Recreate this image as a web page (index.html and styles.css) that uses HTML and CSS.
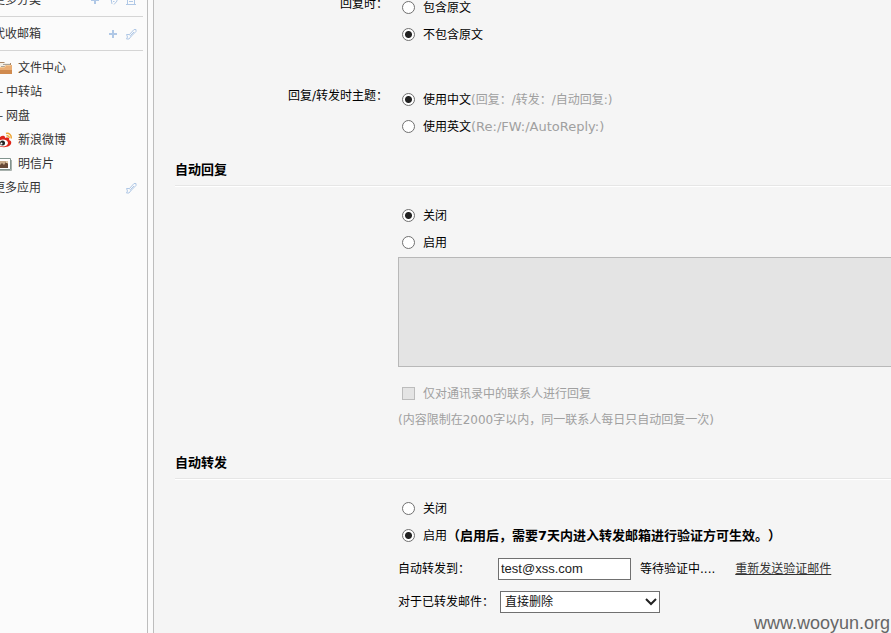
FILE: index.html
```html
<!DOCTYPE html>
<html lang="zh-CN">
<head>
<meta charset="utf-8">
<title>邮箱设置</title>
<link rel="stylesheet" href="styles.css">
</head>
<body>
<div class="page">
  <nav class="sidebar">
    <div class="group">
      <a href="#" class="group-name">更多分类</a>
      <span class="tools">
        <svg class="tool" viewBox="0 0 12 12"><path d="M6 2v8M2 6h8" stroke-width="2"/></svg>
        <svg class="tool" viewBox="0 0 12 12"><path d="M2 5l2 0 1 5M7 10.500l3-3.500V4H7L4 7M6 7.500h1.500"/></svg>
        <svg class="tool" viewBox="0 0 12 12"><path d="M2.500 1.500h7v9h-7zM1 10.500h10M4 5.500h4M4 7.500h4"/></svg>
      </span>
    </div>
    <div class="group">
      <a href="#" class="group-name">代收邮箱</a>
      <span class="tools">
        <svg class="tool" viewBox="0 0 12 12"><path d="M6 2v8M2 6h8" stroke-width="2"/></svg>
        <svg class="tool" viewBox="0 0 12 12"><path d="M1.500 6.500h3l1.500 2-2 2.500h-2.500l1-2zM4.500 6.500L9 1.500h2v2L6 8.500M6 7l3-3"/></svg>
      </span>
    </div>
    <ul class="apps">
      <li><svg class="app-icon" viewBox="0 0 16 16"><path d="M1 2h7l1 1h6v10H1z" fill="#a98766"/><path d="M2 3h12v6H2z" fill="#f3eee4"/><path d="M7 4.500h7M5 6.500h9" stroke="#a9a39a"/><path d="M0 7h8l2-2h6v9H0z" fill="#e9ad74"/><path d="M0 10h16v4H0z" fill="#d08a4e"/><path d="M0 7.500h8.500l2-2H15" fill="none" stroke="#f3c895"/></svg><a href="#">文件中心</a></li>
      <li class="plain"><span class="dash">·-</span><a href="#">中转站</a></li>
      <li class="plain"><span class="dash">·-</span><a href="#">网盘</a></li>
      <li><svg class="app-icon" viewBox="0 0 16 16"><path d="M1 10c0-4 5-7 7-6 1 0 1 1 1 2 3-1 5 0 4 2 3 1 3 4 0 6s-12 2-12-4z" fill="#df2419"/><ellipse cx="7" cy="11" rx="5" ry="3.500" fill="#fff"/><circle cx="6.500" cy="11" r="2.500" fill="#222"/><circle cx="5.500" cy="11.500" r="1" fill="#fff"/><path d="M10 1.500c3-1 6 2 5 5M10.500 4c1.500-.5 3 .5 2.500 2" fill="none" stroke="#efa635" stroke-width="1.500"/></svg><a href="#">新浪微博</a></li>
      <li><svg class="app-icon" viewBox="0 0 16 16"><path d="M1.500 2.500h13v11h-13z" fill="#fff" stroke="#81938e"/><path d="M2 14.500h13.500V4" fill="none" stroke="#a8b1ad"/><path d="M4 5h8v7H4z" fill="#c7aa8a"/><path d="M4 9l2-2 2 2 2-3 2 2v4H4z" fill="#684a37"/><path d="M10 5h2v2h-2z" fill="#dfc9a8"/></svg><a href="#">明信片</a></li>
      <li class="more"><a href="#">更多应用</a>
        <svg class="tool" viewBox="0 0 12 12"><path d="M1.500 6.500h3l1.500 2-2 2.500h-2.500l1-2zM4.500 6.500L9 1.500h2v2L6 8.500M6 7l3-3"/></svg></li>
    </ul>
  </nav>

  <main class="content">
    <form>
      <div class="field" role="group" aria-labelledby="l-reply">
        <span class="label" id="l-reply">回复时：</span>
        <div class="options">
          <label class="choice"><input type="radio" name="quote"><span>包含原文</span></label>
          <label class="choice"><input type="radio" name="quote" checked><span>不包含原文</span></label>
        </div>
      </div>
      <div class="field spaced" role="group" aria-labelledby="l-subject">
        <span class="label" id="l-subject">回复/转发时主题：</span>
        <div class="options">
          <label class="choice"><input type="radio" name="subject" checked><span>使用中文<span class="hint">(回复：/转发：/自动回复:)</span></span></label>
          <label class="choice"><input type="radio" name="subject"><span>使用英文<span class="hint latin">(Re:/FW:/AutoReply:)</span></span></label>
        </div>
      </div>

      <h2>自动回复</h2>
      <div class="field">
        <div class="options">
          <label class="choice"><input type="radio" name="auto" checked><span>关闭</span></label>
          <label class="choice"><input type="radio" name="auto"><span>启用</span></label>
          <textarea class="message" aria-label="自动回复" disabled></textarea>
          <label class="choice hint"><input type="checkbox" disabled><span>仅对通讯录中的联系人进行回复</span></label>
          <p class="note hint">(内容限制在2000字以内，同一联系人每日只自动回复一次)</p>
        </div>
      </div>

      <h2>自动转发</h2>
      <div class="field">
        <div class="options">
          <label class="choice"><input type="radio" name="forward"><span>关闭</span></label>
          <label class="choice"><input type="radio" name="forward" checked><span>启用<strong>（启用后，需要7天内进入转发邮箱进行验证方可生效。）</strong></span></label>
          <div class="line">
            <label for="target">自动转发到：</label>
            <input type="text" id="target" class="target" value="test@xss.com">
            <span class="status">等待验证中....</span>
            <a href="#" class="resend">重新发送验证邮件</a>
          </div>
          <div class="line">
            <label for="after">对于已转发邮件：</label>
            <span class="picker">
              <select id="after"><option>直接删除</option></select>
              <svg class="arrow" viewBox="0 0 12 8"><path d="M1 1l5 5 5-5"/></svg>
            </span>
          </div>
        </div>
      </div>
    </form>
  </main>
  <div class="watermark">www.wooyun.org</div>
</div>
</body>
</html>
```

FILE: styles.css
```css
* { box-sizing: border-box; }

body {
  margin: 0;
  overflow: hidden;
  background: #f5f5f5;
  color: #000;
  font: 12px/18px "DejaVu Sans", "Noto Sans CJK SC", sans-serif;
  text-spacing-trim: space-all;
}

.page {
  position: relative;
  display: flex;
  height: 100vh;
  overflow: hidden;
}

/* Sidebar */
.sidebar {
  flex: 0 0 154px;
  padding-right: 11px;
  background:
    linear-gradient(#bdbdbd, #bdbdbd) right 6px top / 1px 100% no-repeat,
    linear-gradient(#bdbdbd, #bdbdbd) right top / 1px 100% no-repeat,
    #fbfbfb;
  overflow: hidden;
}

.sidebar a { color: #333; text-decoration: none; }

.group {
  display: flex;
  align-items: center;
  justify-content: space-between;
  height: 34px;
  padding-right: 6px;
  border-bottom: 1px solid #d5d5d5;
}

.group:first-child { margin-top: -17px; }
.group-name { margin-left: -7px; }
.tools { display: flex; gap: 6px; }

.tool {
  width: 12px;
  height: 12px;
  fill: none;
  stroke: #b0c8e6;
}

.apps {
  margin: 5px 0 0;
  padding: 0;
  list-style: none;
}

.apps li {
  display: flex;
  align-items: center;
  gap: 6px;
  height: 24px;
}

.app-icon { width: 16px; height: 16px; margin-left: -4px; }
.apps .plain { gap: 3px; }
.dash { margin-left: -5px; width: 8px; color: #555; }
.apps .more {
  justify-content: space-between;
  margin-left: -7px;
  padding-right: 6px;
}

/* Settings form */
.content {
  flex: 1;
  min-width: 0;
  margin-top: -6px;
  padding-left: 21px;
}

.field {
  display: grid;
  grid-template-columns: 213px 1fr;
  column-gap: 10px;
}

.spaced { margin-top: 38px; }
.label { padding-top: 1px; text-align: right; }
.options { grid-column: 2; min-width: 0; }

.choice {
  display: flex;
  align-items: center;
  gap: 8px;
  height: 27px;
  padding-left: 4px;
}

.choice input {
  flex: none;
  width: 13px;
  height: 13px;
  margin: 0;
  appearance: none;
  border: 1px solid #707070;
  background: #fff;
}

.choice input[type="radio"] { border-radius: 50%; }
.choice input[type="radio"]:checked {
  background: radial-gradient(circle, #222 3px, #fff 4px);
}
.choice input[type="checkbox"] {
  border-color: #bcbcbc;
  background: #e4e4e4;
}

.hint { color: #a0a0a0; }
.latin { font-size: 13px; }
.choice strong { font-size: 13px; }

h2 {
  margin: 15px 0 15px;
  height: 32px;
  border-bottom: 1px solid #fff;
  box-shadow: inset 0 -1px #e6e6e6;
  font-size: 13px;
  line-height: 30px;
}

.message {
  display: block;
  width: calc(100% + 8px);
  height: 110px;
  margin: 1px 0 13px;
  border: 1px solid #b8b8b8;
  background: #e4e4e4;
  resize: none;
}

.note { margin: 0; line-height: 26px; }

.line {
  display: flex;
  align-items: center;
  height: 33px;
}

.line:first-of-type { margin-top: 3px; }
.line label { min-width: 100px; white-space: nowrap; }

.target {
  width: 133px;
  height: 22px;
  padding: 0 2px;
  border: 1px solid #707070;
  background: #fff;
  color: #222;
  font: 13px/18px "Liberation Sans", sans-serif;
}

.status { margin: 0 20px 0 9px; }
.resend { color: #333; }

.picker { position: relative; margin-left: 2px; }

.picker select {
  display: block;
  width: 160px;
  height: 22px;
  padding: 0 4px;
  appearance: none;
  border: 1px solid #707070;
  border-radius: 0;
  background: #fff;
  color: #111;
  font: inherit;
}

.arrow {
  position: absolute;
  top: 7px;
  right: 3px;
  width: 12px;
  height: 8px;
  fill: none;
  stroke: #222;
  stroke-width: 2;
  pointer-events: none;
}

.watermark {
  position: absolute;
  right: 1px;
  bottom: 0;
  color: #666;
  font: 18px/20px "Liberation Sans", sans-serif;
}
```
